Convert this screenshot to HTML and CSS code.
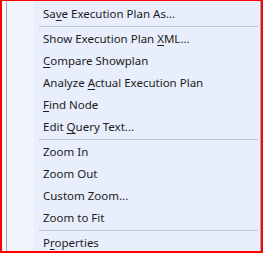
FILE: index.html
```html
<!DOCTYPE html>
<html lang="en">
<head>
    <meta charset="UTF-8">
    <title>Execution Plan Menu</title>
    <link rel="stylesheet" href="styles.css">
</head>
<body>
    <div class="frame">
        <div class="menu">
            <div class="item">Sa<u>v</u>e Execution Plan As...</div>
            <div class="sep"></div>
            <div class="item">Show Execution Plan <u>X</u>ML...</div>
            <div class="item"><u>C</u>ompare Showplan</div>
            <div class="item">Analyze <u>A</u>ctual Execution Plan</div>
            <div class="item"><u>F</u>ind Node</div>
            <div class="item">Edit <u>Q</u>uery Text...</div>
            <div class="sep"></div>
            <div class="item">Zoom In</div>
            <div class="item">Zoom Out</div>
            <div class="item">Custom Zoom...</div>
            <div class="item">Zoom to Fit</div>
            <div class="sep"></div>
            <div class="item">P<u>r</u>operties</div>
        </div>
    </div>
</body>
</html>
```

FILE: styles.css
```css
body {
    margin: 0;
    background-color: #fff;
    font-family: 'Segoe UI', 'Noto Sans', sans-serif;
    font-size: 11.5px;
    color: #1b1b1b;
}
.frame {
    width: 263px;
    height: 253px;
    box-sizing: border-box;
    border-top: 1px solid #ff0000;
    border-left: 2px solid #ff0000;
    border-right: 2px solid #ff0000;
    border-bottom: 2px solid #ff0000;
    background-color: #f8f9fc;
    padding-left: 4px;
    display: flex;
    overflow: hidden;
}
.menu {
    flex: 1;
    border-left: 1px solid #a3a8b1;
    border-right: 1px solid #a3a8b1;
    background: linear-gradient(to right, #f0f3fb 27px, #e9eefc 27px);
    padding-top: 2px;
}
.item {
    height: 22px;
    line-height: 22px;
    padding-left: 36px;
    white-space: nowrap;
}
.item u {
    text-decoration-thickness: 1px;
    text-underline-offset: 2px;
}
.sep {
    height: 1px;
    background-color: #c2c5cc;
    margin: 1px 2px 1px 32px;
}
```
